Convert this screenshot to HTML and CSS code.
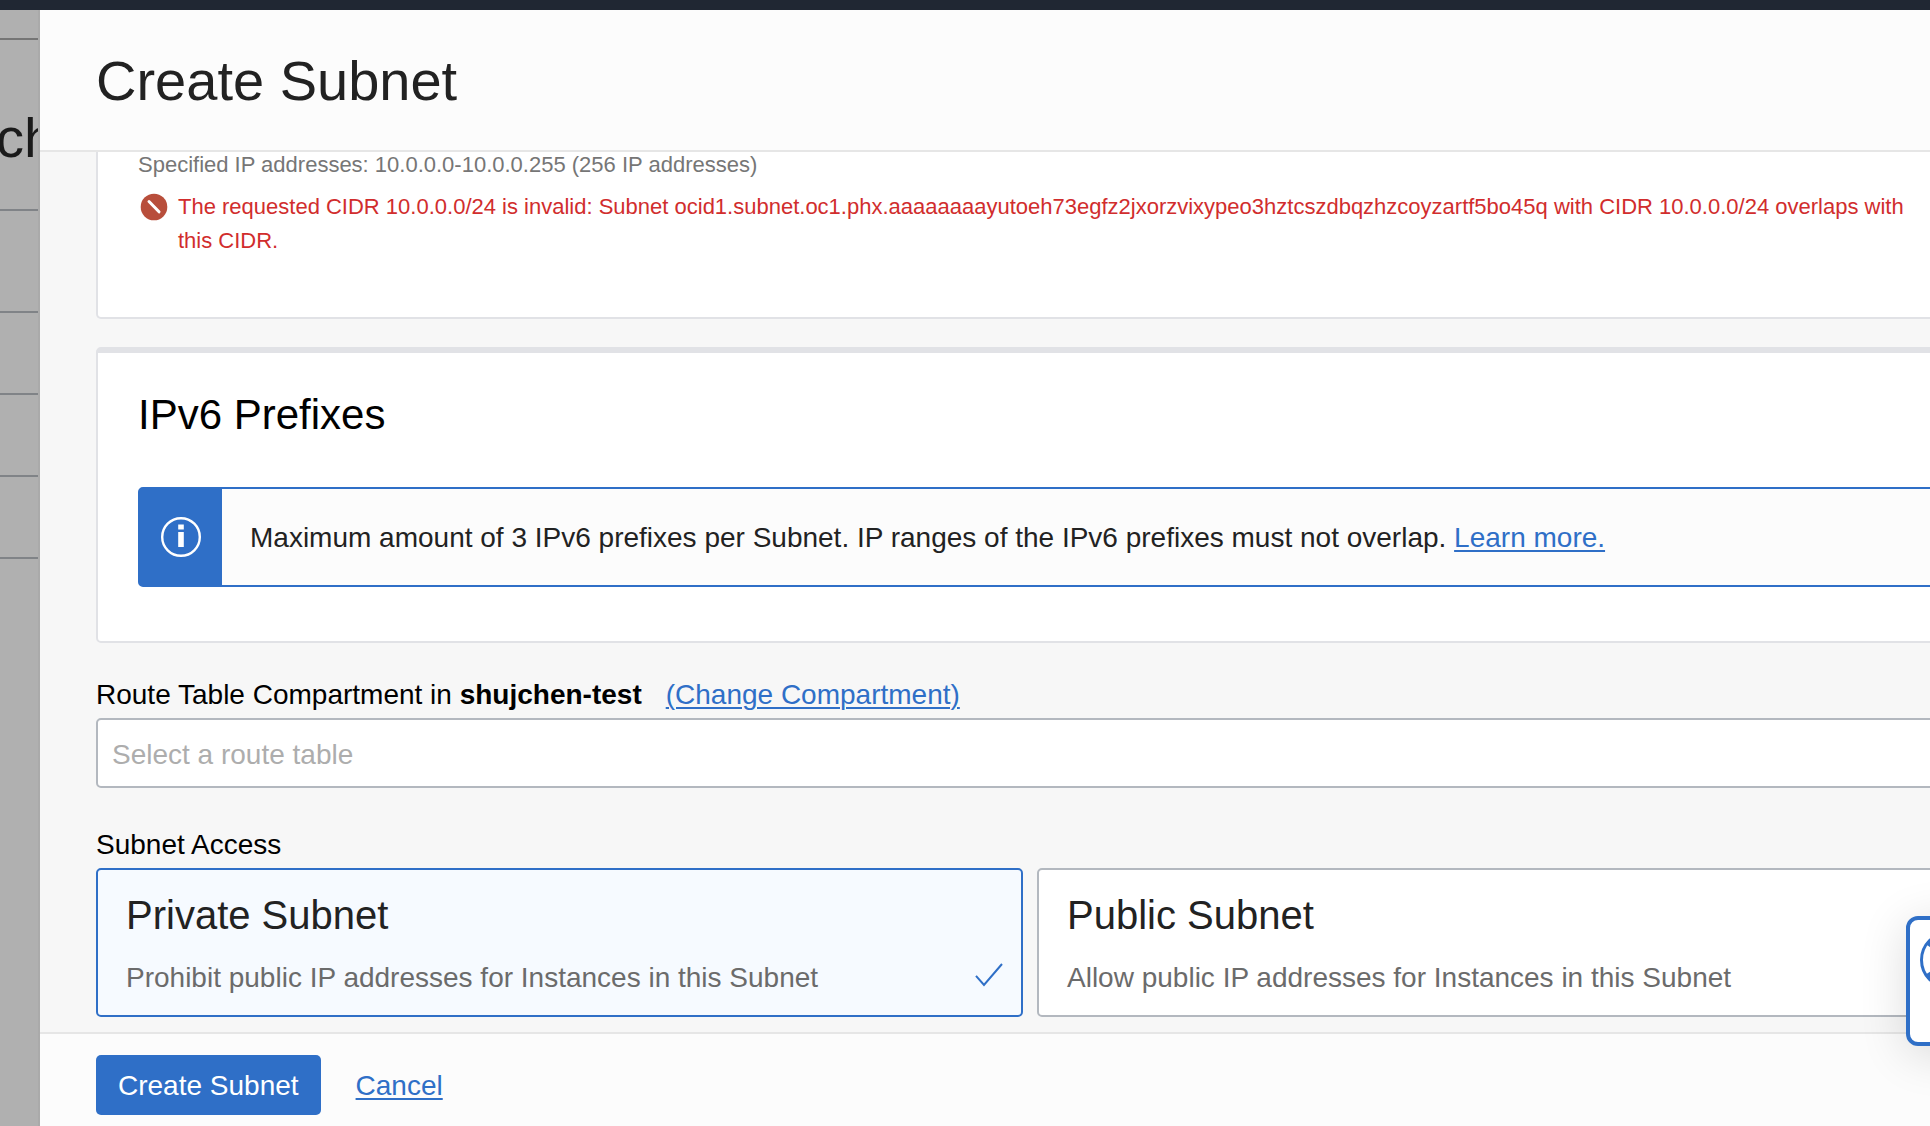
FILE: index.html
```html
<!DOCTYPE html>
<html lang="en">
<head>
<meta charset="utf-8">
<title>Create Subnet</title>
<link rel="stylesheet" href="styles.css">
</head>
<body>
<div class="topbar"></div>
<div class="workspace">
  <aside class="backdrop">
    <div class="row row-first"></div>
    <div class="row row-title">ch</div>
    <div class="row row-head"></div>
    <div class="row"></div>
    <div class="row"></div>
    <div class="row"></div>
  </aside>
  <main class="panel">
    <header class="panel-header"><h1>Create Subnet</h1></header>
    <form class="panel-body" id="subnet-form">
      <section class="card card-scrolled">
        <p class="hint">Specified IP addresses: 10.0.0.0-10.0.0.255 (256 IP addresses)</p>
        <div class="error">
          <svg class="error-icon" viewBox="0 0 28 28" aria-hidden="true"><circle cx="14" cy="14" r="13.3" fill="#b84e3b"/><path d="M9 8.5 19 18.8" stroke="#fff" stroke-width="3" stroke-linecap="round"/></svg>
          <p>The requested CIDR 10.0.0.0/24 is invalid: Subnet ocid1.subnet.oc1.phx.aaaaaaaayutoeh73egfz2jxorzvixypeo3hztcszdbqzhzcoyzartf5bo45q with CIDR 10.0.0.0/24 overlaps with this CIDR.</p>
        </div>
      </section>
      <section class="card card-prefixes">
        <h2>IPv6 Prefixes</h2>
        <div class="notice">
          <div class="notice-mark">
            <svg class="notice-icon" viewBox="0 0 40 40" aria-hidden="true"><circle cx="20" cy="20" r="18.8" fill="none" stroke="#fff" stroke-width="2.4"/><path d="M17.2 7.500h5.600v5h-5.600zM17.200 15h5.600v15h-5.600z" fill="#fff"/></svg>
          </div>
          <p>Maximum amount of 3 IPv6 prefixes per Subnet. IP ranges of the IPv6 prefixes must not overlap. <a href="#">Learn more.</a></p>
        </div>
      </section>
      <div class="field">
        <div class="field-label">
          <label for="route-table">Route Table Compartment in <strong>shujchen-test</strong></label>
          <a href="#">(Change Compartment)</a>
        </div>
        <select id="route-table" class="select"><option>Select a route table</option></select>
      </div>
      <fieldset class="access">
        <legend>Subnet Access</legend>
        <div class="options">
          <label class="option">
            <input type="radio" name="access" checked>
            <span class="option-title">Private Subnet</span>
            <span class="option-text">Prohibit public IP addresses for Instances in this Subnet</span>
            <svg class="check" viewBox="0 0 28 24" aria-hidden="true"><path d="M1 12.800 9 22 27 1" fill="none" stroke="#2f6fc7" stroke-width="2"/></svg>
          </label>
          <label class="option">
            <input type="radio" name="access">
            <span class="option-title">Public Subnet</span>
            <span class="option-text">Allow public IP addresses for Instances in this Subnet</span>
          </label>
        </div>
      </fieldset>
    </form>
    <footer class="panel-footer">
      <button type="submit" form="subnet-form" class="primary">Create Subnet</button>
      <a href="#">Cancel</a>
    </footer>
  </main>
</div>
<button type="button" class="help" aria-label="Help">
  <svg class="help-icon" viewBox="0 0 58 58" aria-hidden="true"><circle cx="29" cy="29" r="27.5" fill="none" stroke="#2f6fc7" stroke-width="3"/><circle cx="29" cy="29" r="20" fill="none" stroke="#2f6fc7" stroke-width="15" stroke-dasharray="8.416 23" stroke-dashoffset="-11.5"/></svg>
</button>
</body>
</html>
```
FILE: styles.css
```css
* { box-sizing: border-box; }

body {
  margin: 0;
  height: 100vh;
  display: flex;
  flex-direction: column;
  overflow: hidden;
  font-family: "Liberation Sans", Arial, sans-serif;
  font-size: 28px;
  line-height: 34px;
  color: #222;
  background: #b0b0b0;
}

h1, h2, p { margin: 0; font-weight: 400; }
a { color: #2f6fc7; text-decoration-thickness: 2px; text-underline-offset: 3px; }

.topbar { flex: none; height: 10px; background: #202733; }
.workspace { flex: 1; min-height: 0; display: flex; }

/* Page behind the slide-in panel */
.backdrop { flex: none; width: 40px; border-right: 2px solid #aaa; overflow: hidden; }
.row { height: 82px; border-bottom: 2px solid #808387; }
.row-first { height: 30px; border-color: #757575; }
.row-title { height: 171px; font-size: 56px; line-height: 196px; text-indent: -4px; color: #1a1a1a; }
.row-head { height: 102px; }

/* The panel is wider than the visible area */
.panel { flex: 1; margin-right: -90px; min-width: 0; display: flex; flex-direction: column; background: #f7f7f7; }
.panel-header { flex: none; padding: 39px 56px 37px; border-bottom: 2px solid #e6e6e6; background: #fcfcfc; }
h1 { font-size: 56px; line-height: 64px; }

.panel-body { flex: 1; min-height: 0; overflow: hidden; padding: 0 56px; color: #000; }

.card { border: 2px solid #e1e2e6; border-radius: 5px; padding: 0 40px; background: #fff; }
.card-scrolled { border-top: 0; border-radius: 0 0 5px 5px; padding-bottom: 59px; font-size: 22px; }
.hint { line-height: 26px; color: #767676; }
.error { display: flex; gap: 10px; margin-top: 12px; color: #d12d2d; }
.error-icon { flex: none; width: 28px; height: 28px; margin-top: 3px; margin-left: 2px; }

.card-prefixes { margin-top: 28px; border-top-width: 6px; padding: 37px 20px 54px 40px; }
h2 { font-size: 42px; line-height: 50px; }
.notice { display: flex; margin-top: 47px; border: 2px solid #2f6fc7; border-radius: 5px; background: #fcfcfc; color: #222; }
.notice-mark { display: flex; align-items: center; justify-content: center; width: 82px; background: #2f6fc7; }
.notice-icon { width: 40px; height: 40px; }
.notice p { padding: 32px 28px 30px; }

.field { margin-top: 35px; }
.field-label { display: flex; gap: 24px; margin-bottom: 6px; }
.select { display: block; width: 100%; height: 70px; padding: 4px 14px 0; appearance: none; border: 2px solid #b3b8bf; border-radius: 5px; background: #fff; font: inherit; color: #adadad; }

.access { margin: 40px 0 0; padding: 0; border: 0; min-width: 0; }
legend { padding: 0; margin-bottom: 6px; }
.options { display: grid; grid-template-columns: 1fr 1fr; gap: 14px; }
.option { position: relative; display: flex; flex-direction: column; gap: 23px; padding: 22px 28px 20px; border: 2px solid #b3b8bf; border-radius: 5px; background: #fff; }
.option:has(input:checked) { border-color: #2f6fc7; background: #f6faff; }
.option input { position: absolute; opacity: 0; margin: 0; }
.option-title { font-size: 40px; line-height: 46px; color: #222; }
.option-text { color: #6b6b6b; }
.check { position: absolute; right: 18px; bottom: 28px; width: 28px; height: 24px; }

.panel-footer { flex: none; display: flex; align-items: baseline; gap: 35px; padding: 21px 56px 11px; border-top: 2px solid #e6e6e6; background: #fcfcfc; }
.primary { height: 60px; padding: 2px 22px 0; border: 0; border-radius: 5px; background: #2f6fc7; color: #fff; font: inherit; }

/* Floating help launcher, docked over the right edge */
.help { position: absolute; right: -62px; bottom: 80px; width: 86px; height: 130px; padding: 11px 10px; border: 4px solid #2f6fc7; border-radius: 12px; background: #fff; box-shadow: 0 8px 48px rgba(0, 0, 0, 0.14); }
.help-icon { display: block; width: 58px; height: 58px; margin-bottom: 42px; }
```
